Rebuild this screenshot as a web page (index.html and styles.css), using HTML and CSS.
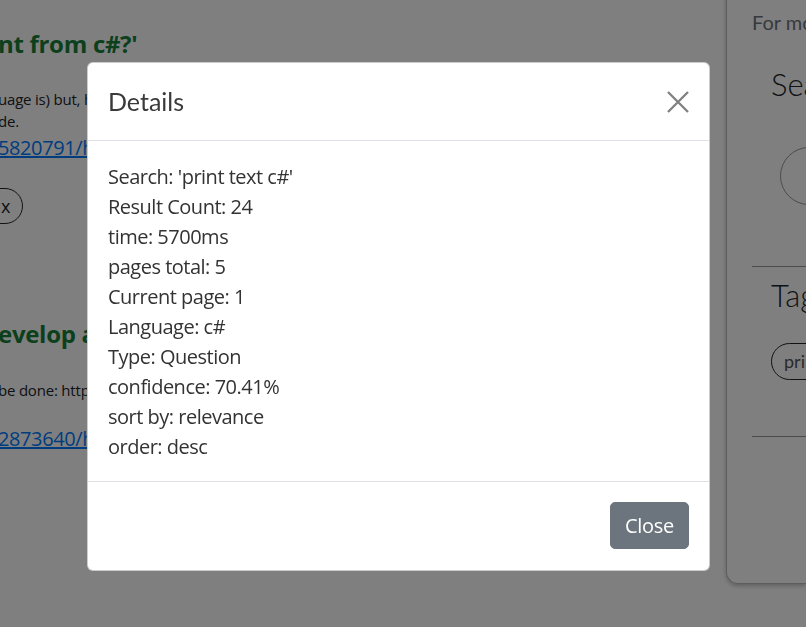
FILE: index.html
```html
<!DOCTYPE html>
<html lang="en">
<head>
<meta charset="utf-8">
<title>Details</title>
<link rel="stylesheet" href="styles.css">
</head>
<body>
<div class="page">
  <div class="main">
    <div class="result">
      <h3 class="result-title">nt from c#?'</h3>
      <p class="result-text">uage is) but, how do I print text to the console in my code.<br>de.</p>
      <a class="result-link" href="#">5820791/how-to-print-text-from-c-sharp</a>
      <div class="result-tags"><span class="tag tag-cut">x</span></div>
    </div>
    <div class="result result-second">
      <h3 class="result-title">evelop a console application in c#</h3>
      <p class="result-text"> be done: https://stackoverflow.com/questions/12873640</p>
      <a class="result-link" href="#">2873640/how-to-develop-a-console-application</a>
    </div>
  </div>
  <aside class="sidebar">
    <div class="card">
      <p class="card-note">For more</p>
      <div class="card-section">
        <h4 class="card-heading">Search</h4>
        <div class="round-box"></div>
      </div>
      <hr class="card-rule card-rule-first">
      <div class="card-section">
        <h4 class="card-heading card-heading-tags">Tags</h4>
        <div class="card-tags"><span class="tag">print</span></div>
      </div>
      <hr class="card-rule card-rule-last">
    </div>
  </aside>
</div>

<div class="backdrop"></div>
<div class="modal">
  <div class="modal-dialog">
    <div class="modal-header">
      <h5 class="modal-title">Details</h5>
      <button class="close" type="button" aria-label="Close">
        <svg width="22" height="22" viewBox="0 0 22 22"><path d="M1 1 L21 21 M21 1 L1 21" stroke="#808080" stroke-width="2.3" fill="none"/></svg>
      </button>
    </div>
    <div class="modal-body">
      <div>Search: 'print text c#'</div>
      <div>Result Count: 24</div>
      <div>time: 5700ms</div>
      <div>pages total: 5</div>
      <div>Current page: 1</div>
      <div>Language: c#</div>
      <div>Type: Question</div>
      <div>confidence: 70.41%</div>
      <div>sort by: relevance</div>
      <div>order: desc</div>
    </div>
    <div class="modal-footer">
      <button class="btn" type="button">Close</button>
    </div>
  </div>
</div>
</body>
</html>
```
FILE: styles.css
```css
html, body {
  margin: 0;
  padding: 0;
  height: 100%;
  overflow: hidden;
}
body {
  font-family: "Open Sans", "Noto Sans", sans-serif;
  font-size: 20px;
  color: #212529;
  background: #fff;
}
.page {
  display: flex;
  height: 100%;
}
.main {
  flex: none;
  width: 726px;
  overflow: hidden;
  white-space: nowrap;
}
.result {
  padding-top: 28px;
  margin-left: -2px;
}
.result-second {
  padding-top: 94px;
}
.result-title {
  margin: 0;
  font-family: "Open Sans", sans-serif;
  font-size: 24px;
  font-weight: 700;
  line-height: 32px;
  letter-spacing: -0.3px;
  color: #198038;
}
.result-text {
  margin: 28px 0 0;
  font-size: 15px;
  line-height: 22px;
  letter-spacing: -0.2px;
}
.result-second .result-text {
  margin-top: 29px;
}
.result-link {
  display: block;
  margin-top: 1px;
  font-size: 20px;
  line-height: 30px;
  letter-spacing: -0.4px;
  color: #007bff;
  text-decoration: underline;
}
.result-second .result-link {
  margin-top: 23px;
}
.result-tags {
  margin-top: 25px;
  margin-left: -36px;
}
.tag {
  display: inline-block;
  border: 1px solid #212529;
  border-radius: 20px;
  padding: 0 12px;
  font-size: 18px;
  line-height: 34px;
  color: #212529;
}
.tag-cut {
  padding-left: 38px;
}
.sidebar {
  flex: 1;
  min-width: 0;
}
.card {
  margin-top: -20px;
  height: 604px;
  box-sizing: border-box;
  border: 1px solid #bbb;
  border-right: none;
  border-radius: 0 0 0 12px;
  box-shadow: 0 2px 4px rgba(0,0,0,0.25);
  padding: 26px 0 0 25px;
  font-family: "Lato", sans-serif;
  white-space: nowrap;
  overflow: hidden;
}
.card-note {
  margin: 0;
  font-size: 20px;
  line-height: 30px;
  color: #6c757d;
}
.card-section {
  padding-left: 19px;
}
.card-heading {
  margin: 25px 0 0;
  font-size: 31px;
  font-weight: 300;
  line-height: 45px;
  color: #212529;
}
.card-heading-tags {
  margin-top: 6px;
}
.round-box {
  margin: 40px 0 0 9px;
  width: 120px;
  height: 56px;
  border: 1px solid #999;
  border-radius: 30px;
}
.card-rule {
  margin: 0;
  border: 0;
  border-top: 1px solid #999;
}
.card-rule-first {
  margin-top: 61px;
}
.card-rule-last {
  margin-top: 56px;
}
.card-tags {
  margin-top: 25px;
}
.card-tags .tag {
  font-family: "Lato", sans-serif;
  font-size: 18px;
  line-height: 35px;
  padding: 0 12px;
  color: #555;
}

.backdrop {
  position: fixed;
  inset: 0;
  background: rgba(0,0,0,0.5);
}
.modal {
  position: fixed;
  inset: 0;
  padding: 62px 0 0 87px;
}
.modal-dialog {
  width: 623px;
  box-sizing: border-box;
  background: #fff;
  border: 1px solid rgba(0,0,0,0.2);
  border-radius: 6px;
  display: flex;
  flex-direction: column;
}
.modal-header {
  display: flex;
  align-items: center;
  justify-content: space-between;
  padding: 20px;
  border-bottom: 1px solid #dee2e6;
  height: 78px;
  box-sizing: border-box;
}
.modal-title {
  margin: 0;
  font-family: "Lato", sans-serif;
  font-weight: 400;
  font-size: 25px;
  line-height: 37px;
  color: #3a3a3a;
}
.close {
  background: none;
  border: 0;
  padding: 0;
  margin: 1px 0 0 auto;
  width: 22px;
  height: 22px;
  display: flex;
  cursor: pointer;
}
.modal-body {
  padding: 21px 20px 19px;
  font-size: 20px;
  line-height: 30px;
  letter-spacing: -0.5px;
  color: #333;
}
.modal-footer {
  display: flex;
  justify-content: flex-end;
  padding: 15px 15px 16px;
  border-top: 1px solid #dee2e6;
}
.btn {
  margin: 5px;
  font-family: "Open Sans", "Noto Sans", sans-serif;
  font-size: 20px;
  line-height: 30px;
  padding: 7.5px 14px;
  color: #fff;
  background: #6c757d;
  border: 1px solid #6c757d;
  border-radius: 5px;
  letter-spacing: -0.3px;
}
```
